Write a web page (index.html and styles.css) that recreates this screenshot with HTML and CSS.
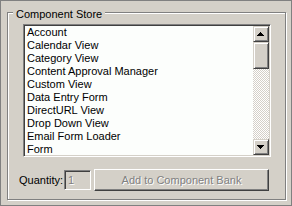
FILE: index.html
```html
<!DOCTYPE html>
<html>
<head>
<meta charset="utf-8">
<link rel="stylesheet" href="styles.css">
</head>
<body>
<div class="panel">
  <div class="group">
    <div class="legend">Component Store</div>
    <div class="listbox">
      <ul class="items">
        <li>Account</li>
        <li>Calendar View</li>
        <li>Category View</li>
        <li>Content Approval Manager</li>
        <li>Custom View</li>
        <li>Data Entry Form</li>
        <li>DirectURL View</li>
        <li>Drop Down View</li>
        <li>Email Form Loader</li>
        <li>Form</li>
      </ul>
      <div class="scrollbar">
        <div class="sb-btn">
          <svg width="14" height="14" viewBox="0 0 14 14"><rect x="6" y="5" width="1" height="1"/><rect x="5" y="6" width="3" height="1"/><rect x="4" y="7" width="5" height="1"/><rect x="3" y="8" width="7" height="1"/></svg>
        </div>
        <div class="sb-thumb"></div>
        <div class="sb-track"></div>
        <div class="sb-btn">
          <svg width="14" height="14" viewBox="0 0 14 14"><rect x="3" y="5" width="7" height="1"/><rect x="4" y="6" width="5" height="1"/><rect x="5" y="7" width="3" height="1"/><rect x="6" y="8" width="1" height="1"/></svg>
        </div>
      </div>
    </div>
    <div class="row">
      <span class="label">Quantity:</span>
      <div class="qty">1</div>
      <div class="button">Add to Component Bank</div>
    </div>
  </div>
</div>
</body>
</html>
```
FILE: styles.css
```css
html, body {
  margin: 0;
  padding: 0;
  background: #d4d0c8;
}
.panel {
  box-sizing: border-box;
  width: 292px;
  height: 206px;
  border: 1px solid #808080;
  background: #d4d0c8;
  padding: 11px 0 0 6px;
  font-family: "Liberation Sans", Arial, sans-serif;
  font-size: 11px;
  line-height: 13px;
  color: #000;
}
.group {
  position: relative;
  box-sizing: border-box;
  width: 279px;
  height: 188px;
  border: 1px solid #808080;
  box-shadow: inset 1px 1px 0 #fff, 1px 1px 0 #fff;
  padding: 11px 0 0 11px;
}
.legend {
  position: absolute;
  left: 5px;
  top: -5px;
  padding: 0 3px 0 3px;
  background: #d4d0c8;
}
.listbox {
  box-sizing: border-box;
  margin-left: 4px;
  width: 248px;
  height: 133px;
  border: 1px solid;
  border-color: #808080 #fff #fff #808080;
  box-shadow: inset 1px 1px 0 #404040, inset -1px -1px 0 #d4d0c8;
  padding: 1px;
  background: #fcfefc;
  display: flex;
}
.items {
  flex: 1;
  list-style: none;
  margin: 0;
  padding: 0 0 0 2px;
  overflow: hidden;
}
.items li {
  height: 13px;
  white-space: nowrap;
}
.scrollbar {
  width: 16px;
  display: flex;
  flex-direction: column;
}
.sb-btn, .sb-thumb {
  box-sizing: border-box;
  width: 16px;
  height: 16px;
  background: #d4d0c8;
  border: 1px solid;
  border-color: #d4d0c8 #404040 #404040 #d4d0c8;
  box-shadow: inset 1px 1px 0 #fff, inset -1px -1px 0 #808080;
  display: flex;
}
.sb-btn svg {
  display: block;
  fill: #000;
}
.sb-thumb {
  height: 27px;
}
.sb-track {
  flex: 1;
  background: repeating-conic-gradient(#fff 0 25%, #d4d0c8 0 50%) 0 0 / 2px 2px;
}
.row {
  display: flex;
  align-items: center;
  margin-top: 12px;
}
.label {
  width: 45px;
}
.qty {
  box-sizing: border-box;
  width: 27px;
  height: 20px;
  border: 1px solid;
  border-color: #808080 #fff #fff #808080;
  box-shadow: inset 1px 1px 0 #404040, inset -1px -1px 0 #d4d0c8;
  padding: 3px 0 0 3px;
  color: #808080;
  text-shadow: 1px 1px 0 #fff;
}
.button {
  box-sizing: border-box;
  margin-left: 3px;
  width: 175px;
  height: 22px;
  border: 1px solid;
  border-color: #fff #404040 #404040 #fff;
  box-shadow: inset -1px -1px 0 #808080;
  color: #808080;
  text-shadow: 1px 1px 0 #fff;
  text-align: center;
  line-height: 20px;
}
```
